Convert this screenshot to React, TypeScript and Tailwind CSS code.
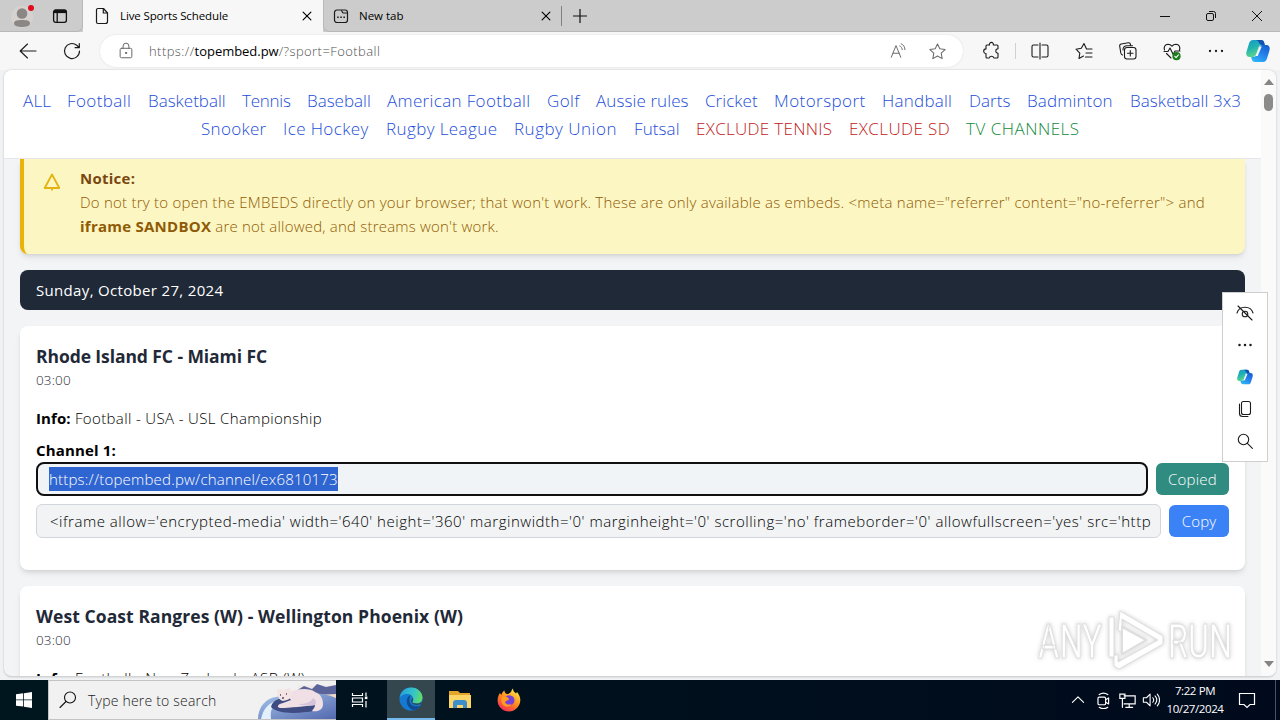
import type { ReactNode } from "react";

const sportLinks = [
  { label: "ALL", cls: "w-7 tracking-[0.2px] text-[#1d4ed8]" },
  { label: "Football", cls: "w-[65px] tracking-[0.4px] text-[#1d4ed8]" },
  { label: "Basketball", cls: "w-[78px] tracking-[0px] text-[#1d4ed8]" },
  { label: "Tennis", cls: "w-[49px] tracking-[-0.25px] text-[#1d4ed8]" },
  { label: "Baseball", cls: "w-16 tracking-[0px] text-[#1d4ed8]" },
  { label: "American Football", cls: "w-36 tracking-[0.35px] text-[#1d4ed8]" },
  { label: "Golf", cls: "w-[33px] tracking-[0.4px] text-[#1d4ed8]" },
  { label: "Aussie rules", cls: "w-[93px] tracking-[0.1px] text-[#1d4ed8]" },
  { label: "Cricket", cls: "w-[53px] tracking-[0.05px] text-[#1d4ed8]" },
  { label: "Motorsport", cls: "w-[92px] tracking-[0.45px] text-[#1d4ed8]" },
  { label: "Handball", cls: "w-[71px] tracking-[0.25px] text-[#1d4ed8]" },
  { label: "Darts", cls: "w-[42px] tracking-[0.05px] text-[#1d4ed8]" },
  { label: "Badminton", cls: "w-[87px] tracking-[0.15px] text-[#1d4ed8]" },
  { label: "Basketball 3x3", cls: "w-[111px] tracking-[0.08px] text-[#1d4ed8]" },
];

const moreLinks = [
  { label: "Snooker", cls: "w-[66px] tracking-[0.3px] text-[#1d4ed8]" },
  { label: "Ice Hockey", cls: "w-[87px] tracking-[0.4px] text-[#1d4ed8]" },
  { label: "Rugby League", cls: "w-28 tracking-[0.4px] text-[#1d4ed8]" },
  { label: "Rugby Union", cls: "w-[104px] tracking-[0.5px] text-[#1d4ed8]" },
  { label: "Futsal", cls: "w-[46px] tracking-[0.1px] text-[#1d4ed8]" },
  { label: "EXCLUDE TENNIS", cls: "w-[137px] tracking-[0.3px] text-[#c11a1a]" },
  { label: "EXCLUDE SD", cls: "w-[101px] tracking-[0.4px] text-[#c11a1a]" },
  { label: "TV CHANNELS", cls: "w-[114px] tracking-[0.5px] text-[#128a3c]" },
];

type IconProps = { children: ReactNode; size?: string; className?: string };

function Icon({ children, size = "size-5", className = "" }: IconProps) {
  return (
    <svg
      viewBox="0 0 20 20"
      className={`${size} shrink-0 ${className}`}
      fill="none"
      stroke="currentColor"
      strokeWidth="1.1"
      strokeLinecap="round"
      strokeLinejoin="round"
    >
      {children}
    </svg>
  );
}

function Copilot({ size }: { size: string }) {
  return (
    <svg viewBox="0 0 24 24" className={`${size} shrink-0`}>
      <defs>
        <linearGradient id="cpl" x1="0" y1="0" x2="0.4" y2="1">
          <stop offset="0" stopColor="#1598c8" />
          <stop offset="0.5" stopColor="#21b3b0" />
          <stop offset="1" stopColor="#5fd88c" />
        </linearGradient>
        <linearGradient id="cpr" x1="0.8" y1="0" x2="0.2" y2="1">
          <stop offset="0" stopColor="#175fd0" />
          <stop offset="0.5" stopColor="#2583ee" />
          <stop offset="1" stopColor="#31b8f5" />
        </linearGradient>
      </defs>
      <path d="M7 1h8c2 0 2.800 1 3.300 3l.5 2h-3c-2 0-2.800 1-3.400 3l-2 6c-.8 2-1.700 3-3.600 3H3.500C.8 18-.2 15.500.5 12.800L3 4.500C3.700 2.200 4.800 1 7 1Z" fill="url(#cpl)" />
      <path d="M17 23H9c-2 0-2.800-1-3.300-3l-.6-2h2c2 0 3.200-1 3.800-3l2-6c.7-2 1.700-3 3.600-3h4c2.700 0 3.700 2.500 3 5.200L21 19.500c-.7 2.300-1.800 3.500-4 3.500Z" fill="url(#cpr)" />
      <path d="M9.500 1H15c2 0 2.800 1 3.300 3l.5 2h-3c-2.600 0-3-5-6.300-5Z" fill="#1450b4" />
      <path d="m13.500 7.500-4 9.500h2.200l4-9.500Z" fill="#f3fbff" />
    </svg>
  );
}

function TitleBar() {
  return (
    <div className="flex h-8 shrink-0 bg-[#cccccc] text-black">
      <div className="flex w-[83px] items-center rounded-br-md border-b border-r border-[#b8b8b8] pl-[11px]">
        <svg viewBox="0 0 22 24" className="h-6 w-[22px] overflow-visible">
          <circle cx="11" cy="13" r="11" fill="#d6d2d0" />
          <circle cx="11" cy="9.500" r="5.300" fill="#8b8784" />
          <path d="M3 19.500c0-3 3-3.500 8-3.500s8 .5 8 3.500c0 2.500-4 3.500-8 3.500s-8-1-8-3.500Z" fill="#8b8784" />
          <circle cx="20" cy="4" r="3" fill="#e00b1c" />
        </svg>
        <svg viewBox="0 0 16 16" className="ml-[19px] size-4" fill="none" stroke="#111" strokeWidth="1.300">
          <rect x="1.600" y="2" width="12.800" height="12.300" rx="2" />
          <path d="M2 3.600h12" strokeWidth="3" />
          <path d="M5.200 5v9" />
        </svg>
      </div>
      <div className="flex w-60 items-center bg-[#f7f7f7] pl-3 pr-[10px]">
        <svg viewBox="0 0 14 18" className="h-[18px] w-3.5" fill="none" stroke="#1b1b1b" strokeWidth="1.200" strokeLinejoin="round">
          <path d="M3 1.500h5.500L12.500 6v8.500a2 2 0 0 1-2 2H3a1.500 1.500 0 0 1-1.500-1.500V3A1.500 1.500 0 0 1 3 1.500Z" />
          <path d="M8.300 1.500V6h4.200" />
        </svg>
        <span className="ml-[11px] whitespace-nowrap text-[11.5px] tracking-[-0.12px]">Live Sports Schedule</span>
        <Icon size="ml-auto size-3">
          <path d="m3.500 3.500 13 13M16.500 3.500l-13 13" strokeWidth="1.900" />
        </Icon>
      </div>
      <div className="flex w-[239px] items-center rounded-bl-md border-b border-l border-[#b8b8b8] pl-[9px] pr-[10px]">
        <svg viewBox="0 0 16 16" className="size-4" fill="none" stroke="#1b1b1b" strokeWidth="1.200">
          <rect x="1.500" y="2" width="13" height="12.500" rx="2.500" />
          <path d="M8 2.500c1.500 0 1 2.500 2.500 2.500h4" />
          <path d="M4.200 9.200h1.500M7.300 9.200h1.500M10.400 9.200h1.500" strokeWidth="1.500" />
        </svg>
        <span className="ml-[10px] whitespace-nowrap text-[11.5px]">New tab</span>
        <Icon size="ml-auto size-3">
          <path d="m3.500 3.500 13 13M16.500 3.500l-13 13" strokeWidth="1.900" />
        </Icon>
      </div>
      <div className="flex flex-1 items-center border-b border-[#b8b8b8]">
        <span className="-ml-px h-5 w-px bg-[#808080]" />
        <svg viewBox="0 0 16 16" className="ml-[10px] size-4" stroke="#111" strokeWidth="1.200">
          <path d="M8 1v14M1 8h14" />
        </svg>
        <div className="ml-auto flex">
          <span className="flex w-[46px] justify-center">
            <svg viewBox="0 0 12 12" className="size-3" fill="none" stroke="#111"><path d="M1 6.500h10" /></svg>
          </span>
          <span className="flex w-[46px] justify-center">
            <svg viewBox="0 0 12 12" className="size-3" fill="none" stroke="#111">
              <rect x="1.500" y="3.500" width="7" height="7" rx="1.500" />
              <path d="M4 1.500h4.500a2 2 0 0 1 2 2V8" />
            </svg>
          </span>
          <span className="flex w-[46px] justify-center">
            <svg viewBox="0 0 12 12" className="size-3" fill="none" stroke="#111"><path d="m1 1 10 10M11 1 1 11" /></svg>
          </span>
        </div>
      </div>
    </div>
  );
}

function Toolbar() {
  return (
    <div className="flex h-[38px] shrink-0 items-center bg-[#f7f7f7] pl-[18px] text-[#1b1b1b]">
      <Icon className="-mt-px">
        <path d="M18 10H2.500M9.500 3 2.200 10l7.300 7" />
      </Icon>
      <Icon size="ml-6 size-5">
        <path d="M17.500 10a7.500 7.500 0 1 1-2.800-5.800L17 6.500M17.300 2.500v4.200h-4.200" strokeWidth="1.200" />
      </Icon>
      <div className="ml-[18px] flex h-8 w-[863px] items-center rounded-full bg-white pl-[17px] pr-4 shadow-[0_0_2px_rgba(0,0,0,0.12)]">
        <Icon size="size-[18px]" className="text-[#666]">
          <rect x="3.500" y="7" width="13" height="10.500" rx="1.500" />
          <path d="M6.800 7V4.500a3.200 3.200 0 0 1 6.400 0V7" />
          <circle cx="10" cy="12.200" r=".7" fill="currentColor" />
        </Icon>
        <span className="ml-[14px] whitespace-nowrap pt-px text-[13px] font-light tracking-[0.43px] text-[#505050]">
          https://<span className="font-normal tracking-[-0.03px] text-black">topembed.pw</span>/?sport=Football
        </span>
        <Icon size="ml-auto size-[18px]" className="text-[#6b6b6b]">
          <path d="M2.500 17 7.800 4l5.300 13M4.300 12.500h7M12 4.500c1.800.8 2.700 2.200 2.700 4M13.500 2c2.700 1.200 4.200 3.400 4.200 6.500" />
        </Icon>
        <Icon size="ml-[21px] size-[19px]" className="text-[#6b6b6b]">
          <path d="m10 2 2.400 5.200 5.600.7-4.100 3.900 1 5.700L10 14.700l-4.900 2.800 1-5.700L2 7.900l5.600-.7L10 2Z" />
        </Icon>
      </div>
      <Icon size="ml-[19px] size-5">
        <path d="M7.500 4a2 2 0 1 1 3.800 0H15a1 1 0 0 1 1 1v2.800a2.200 2.200 0 1 0 0 4.400V16a1 1 0 0 1-1 1h-3.200a2.300 2.300 0 0 0-4.500 0H5a1 1 0 0 1-1-1v-3.500a2.300 2.300 0 1 1 0-4.600V5a1 1 0 0 1 1-1h2.500Z" />
      </Icon>
      <span className="ml-[13px] h-4 w-px bg-[#d0d0d0]" />
      <Icon size="ml-[14px] size-5">
        <path d="M8 4H3.500A1.500 1.500 0 0 0 2 5.500v9A1.500 1.500 0 0 0 3.500 16H8M12 4h4.500A1.500 1.500 0 0 1 18 5.500v9a1.500 1.500 0 0 1-1.500 1.500H12M10 2v16" strokeLinejoin="miter" />
      </Icon>
      <Icon size="ml-6 size-5">
        <path d="M18 8h-5.500L10 2.500 7.300 7.200 2 8.200l3.800 4-.8 5.300 4.500-2.400M12 12h6M11.500 16H18" />
      </Icon>
      <Icon size="ml-6 size-5">
        <rect x="6.500" y="6.500" width="11.500" height="11.500" rx="2.500" />
        <path d="M12.300 9.500v5.500M9.500 12.300H15M4.500 14c-1.200-.5-1.500-1-1.700-2L1.700 5.200c-.2-1.300.5-2 1.600-2.200l7-1.200c1.200-.2 2 .5 2.300 2M5 9C5 6 6 4.800 9 4.800h5.500" />
      </Icon>
      <Icon size="ml-6 size-5">
        <path d="M17.500 9c1-3-.5-5.700-3.500-5.800-2 0-3.300 1-4 2-.8-1-2-2-4-2C3 3.300 1.500 6 2.500 9M2 10.500h4L8 7l3.200 6.500L13 10h5M4.500 12.500 9 17" />
        <circle cx="14.500" cy="15.200" r="4.100" fill="#1c7d1c" stroke="none" />
        <path d="m12.800 15.300 1.300 1.300 2.300-2.800" stroke="#fff" />
      </Icon>
      <Icon size="ml-6 size-5">
        <path d="M4 10h.01M10 10h.01M16 10h.01" strokeWidth="2.300" />
      </Icon>
      <span className="ml-5">
        <Copilot size="size-6" />
      </span>
    </div>
  );
}

function SportNav() {
  return (
    <nav className="h-[89px] shrink-0 border-b border-gray-200 bg-white pt-[17px] text-[17px] font-light leading-7">
      <div className="flex justify-center gap-4 pr-px">
        {sportLinks.map((link) => (
          <a key={link.label} className={`whitespace-nowrap ${link.cls}`}>{link.label}</a>
        ))}
      </div>
      <div className="flex justify-center gap-4 pl-4">
        {moreLinks.map((link) => (
          <a key={link.label} className={`whitespace-nowrap ${link.cls}`}>{link.label}</a>
        ))}
      </div>
    </nav>
  );
}

function Notice() {
  return (
    <div className="flex h-[95px] shrink-0 rounded-b-lg border-l-4 border-[#eab308] bg-[#fcf6c2] px-4 pt-[7px] text-[15px] leading-6 shadow-md">
      <svg viewBox="0 0 24 24" className="mt-1 size-6 shrink-0" fill="none" stroke="#e3b40f" strokeWidth="1.800" strokeLinejoin="round">
        <path d="M12 4.500 19.300 18H4.700L12 4.500ZM12 18v2.500" />
      </svg>
      <div className="ml-4 text-[#8f5a05]">
        <p className="font-bold tracking-[0.25px] text-[#7a4710]">Notice:</p>
        <p className="whitespace-nowrap font-light tracking-[0.235px]">
          Do not try to open the EMBEDS directly on your browser; that won't work. These are only available as embeds. &lt;meta name="referrer" content="no-referrer"&gt; and
        </p>
        <p className="font-light tracking-[0.2px]">
          <b className="font-bold tracking-[0.25px]">iframe SANDBOX</b> are not allowed, and streams won't work.
        </p>
      </div>
    </div>
  );
}

function MatchCard({ title, info, children }: { title: ReactNode; info: string; children?: ReactNode }) {
  return (
    <div className="mt-4 h-[244px] shrink-0 rounded-lg bg-white p-4 text-[15px] shadow-md">
      <h3 className="text-[17.5px] font-bold leading-7 text-[#1f2937]">{title}</h3>
      <p className="text-[13.5px] font-light leading-5 tracking-[0.15px] text-[#1f2937]">03:00</p>
      <p className="mt-4 font-light leading-6 tracking-[0.36px] text-black">
        <b className="font-bold tracking-[0.1px]">Info:</b> {info}
      </p>
      {children}
    </div>
  );
}

function Page() {
  return (
    <div className="relative mx-1 flex h-[607px] shrink-0 overflow-hidden rounded-lg border-b border-[#d4d4d4] bg-[#f2f4f5] shadow-[0_0_2px_rgba(0,0,0,0.25)]">
      <div className="flex w-[1257px] flex-col">
        <SportNav />
        <main className="flex min-h-0 flex-1 flex-col pl-4 pr-4">
          <Notice />
          <div className="mt-4 h-10 shrink-0 rounded-lg bg-[#1f2937] px-4 text-[15px] leading-10 tracking-[0.33px] text-white">
            Sunday, October 27, 2024
          </div>
          <MatchCard
            title={<span className="tracking-[-0.08px]">Rhode Island FC - Miami FC</span>}
            info="Football - USA - USL Championship"
          >
            <p className="mt-2 font-bold leading-6 tracking-[0.15px] text-black">Channel 1:</p>
            <div className="flex items-center gap-2 font-light">
              <div className="flex h-[34px] w-[1112px] items-center rounded-lg border-2 border-[#101010] bg-[#f1f4f6] pl-[11px]">
                <span className="w-[289px] whitespace-nowrap bg-[#2f65d0] leading-6 tracking-[0.2px] text-white">
                  https://topembed.pw/channel/ex6810173
                </span>
              </div>
              <button className="h-8 w-[73px] rounded-md bg-[#308c80] tracking-[0.2px] text-white">Copied</button>
            </div>
            <div className="mt-2 flex items-center gap-2 font-light">
              <div className="h-[34px] w-[1125px] rounded-md border border-gray-300 bg-[#f1f3f4] px-[13px]">
                <div className="w-[1100px] whitespace-nowrap leading-8 tracking-[0.53px] text-black">
                  &lt;iframe allow='encrypted-media' width='640' height='360' marginwidth='0' marginheight='0' scrolling='no' frameborder='0' allowfullscreen='yes' src='http
                </div>
              </div>
              <button className="h-8 w-[60px] rounded-md bg-[#3b82f6] tracking-[0.2px] text-white">Copy</button>
            </div>
          </MatchCard>
          <MatchCard
            title={<span className="tracking-[0.08px]">West Coast Rangres (W) - Wellington Phoenix (W)</span>}
            info="Football - New Zealand - ASB (W)"
          />
        </main>
      </div>
      <div className="flex flex-1 flex-col items-center bg-[#fafafa] py-[9px]">
        <svg viewBox="0 0 10 6" className="h-1.5 w-2.5"><path d="M5 0 10 6H0Z" fill="#858585" /></svg>
        <span className="mt-[9px] h-[17px] w-[9px] rounded-full bg-[#8b8b8b]" />
        <svg viewBox="0 0 10 6" className="mt-auto h-1.5 w-2.5"><path d="M0 0h10L5 6Z" fill="#858585" /></svg>
      </div>
    </div>
  );
}

function MiniMenu() {
  return (
    <div className="absolute left-[1222px] top-[292px] flex h-[170px] w-[46px] flex-col items-center gap-3 border border-[#cfcfcf] bg-white pt-[10px] text-[#1b1b1b]">
      <Icon>
        <path d="M2 10c1-3.500 4-5.700 8-5.700s7 2.200 8 5.700M3 3l14 14" />
        <circle cx="10" cy="11" r="2.800" />
      </Icon>
      <Icon>
        <path d="M4.500 10h.01M10 10h.01M15.500 10h.01" strokeWidth="2.500" />
      </Icon>
      <span className="flex size-5 items-center justify-center"><Copilot size="size-4" /></span>
      <Icon>
        <rect x="6.500" y="2.500" width="9" height="13" rx="2" />
        <path d="M4.500 5v9.500a3 3 0 0 0 3 3h5.500" />
      </Icon>
      <Icon>
        <circle cx="8.500" cy="8.500" r="5.200" />
        <path d="m12.400 12.400 5 5" />
      </Icon>
    </div>
  );
}

function Watermark() {
  return (
    <svg viewBox="0 0 200 66" className="absolute left-[1035px] top-[607px] h-[66px] w-[200px] drop-shadow-[0_0_2px_rgba(0,0,0,0.2)]" fill="#fff" stroke="#dedede">
      <g fontFamily="Roboto, sans-serif" fontSize="48" strokeWidth="1">
        <text x="3" y="51" textLength="64" lengthAdjust="spacingAndGlyphs">ANY</text>
        <text x="133" y="51" textLength="64" lengthAdjust="spacingAndGlyphs">RUN</text>
      </g>
      <path d="M85 4 128 29v8L84 62l-5-3V49l4-2v8l40-22L87 12v13l-4-2Z" />
      <path d="M87 20 111 33 87 47Z" strokeWidth="2" />
      <path d="M74 10h5v40h-5Z" />
    </svg>
  );
}

function BearScene() {
  return (
    <svg viewBox="0 0 78 38" className="h-[38px] w-[78px]">
      <defs>
        <linearGradient id="ice" x1="0" y1="0" x2="1" y2="1">
          <stop offset="0" stopColor="#a9c7ec" />
          <stop offset="1" stopColor="#5268ae" />
        </linearGradient>
        <linearGradient id="sky" x1="0" y1="0" x2="0" y2="1">
          <stop offset="0" stopColor="#f1eceb" />
          <stop offset="1" stopColor="#eec9a6" />
        </linearGradient>
      </defs>
      <path d="M40 4h38v22H40Z" fill="url(#sky)" />
      <path d="m38 10 8-5 8 3 5-5 9 3 10-2v9L58 14Z" fill="#5a649b" />
      <path d="M0 38c0-12 8-21 18-22 22-6 48-5 60 1v21Z" fill="url(#ice)" />
      <path d="M3 38c2-10 8-17 18-19-7 5-9 11-8 19Z" fill="#e3effb" />
      <path d="M13 26c1-5 5-8 12-9l31 2c6 7 2 12-8 12-15 2-29 1-35-5Z" fill="#3f4c83" />
      <path d="M28 13c9-5 22-7 29-2 6 2 8 7 8 12 0 6-5 8-11 7 2-3 3-4 3-6-10 1-25 3-35 3-4-1-2-4 3-5l8-3Z" fill="#f0dfe4" />
      <path d="M40 23c8 0 13-2 15-6 3 2 4 5 2 7-5 1-11 1-17-1Z" fill="#d5c5dc" />
      <path d="M19 10c0-2 3-3 5-1l5-1c1-2 4-1 4 1 2 4 0 9-4 10l-4 1c-4-1-6-5-6-10Z" fill="#f4e4e4" />
      <path d="M22 14h1M28 13h1M24 17h2" stroke="#54485c" strokeWidth="1.300" />
    </svg>
  );
}

function Taskbar() {
  return (
    <div className="mt-auto flex h-10 shrink-0 items-center bg-gradient-to-r from-[#00161e] to-[#000a1c] text-white">
      <span className="flex w-12 justify-center">
        <svg viewBox="0 0 16 16" className="size-4" fill="#fff">
          <path d="m0 2.300 7.200-1v6.200H0ZM8 1.200 16 0v7.500H8ZM0 8.300h7.200v6.300L0 13.700ZM8 8.300h8V16l-8-1.200Z" />
        </svg>
      </span>
      <div className="flex h-10 w-72 items-center border-y border-l border-[#c4c4c4] bg-[#f1f1f1] pl-[9px]">
        <Icon size="size-5" className="text-[#111]">
          <circle cx="12" cy="7.500" r="5.500" />
          <path d="m8 11.500-6 6" />
        </Icon>
        <span className="ml-[10px] whitespace-nowrap text-[14px] font-light tracking-[0.2px] text-[#222]">Type here to search</span>
        <span className="ml-auto"><BearScene /></span>
      </div>
      <span className="flex w-[51px] justify-center">
        <svg viewBox="0 0 18 18" className="-ml-[3px] size-[18px]" fill="none" stroke="#fff" strokeWidth="1.200">
          <path d="M1.500 2v2.500h10V2M1.500 16v-2.500h10V16M1.500 7h10v4h-10ZM15 1.500V5M15 10v6.500" />
          <path d="M13.800 5.500h2.600v2.600h-2.600Z" fill="#fff" stroke="none" />
        </svg>
      </span>
      <span className="flex h-10 w-12 items-center justify-center border-b-2 border-[#76b9ed] bg-[#34474e]">
        <svg viewBox="0 0 24 24" className="size-6">
          <defs>
            <linearGradient id="edgeTop" x1="0" y1="0.3" x2="1" y2="0.5">
              <stop offset="0" stopColor="#279fe0" />
              <stop offset="0.6" stopColor="#35c4c7" />
              <stop offset="1" stopColor="#62dd65" />
            </linearGradient>
          </defs>
          <circle cx="12" cy="12" r="11.500" fill="#1479cf" />
          <path d="M.6 11C1.500 4.500 6.500.5 12 .5c7 0 11.500 5 11.500 10 0 4-3 6-6.200 6-2.500 0-4-.8-4-1.500 0-.6 1-.9 1-3 0-2.500-2.500-5-6-5C4.500 7 1.500 9 .6 11Z" fill="url(#edgeTop)" />
          <path d="M12 7.800c-3 1.400-4.700 4-4.200 7.500.5 4 3.400 7 7 7.800 2.700-.6 5.200-2.400 6.700-4.700-4 2-10.500 1-11-4.300-.2-2.500.5-4 1.500-6.300Z" fill="#114a91" />
          <path d="M14 11c-1.800 1.200-2.500 3-1.200 5 1.700 2 5 2.500 8 1.200l1.500.4.700-2.600c-1.600 1.200-3.400 1.500-5.700 1.500-2.500 0-4-.8-4-1.500 0-.6 1-.9.7-4Z" fill="#34474e" />
        </svg>
      </span>
      <span className="flex w-[49px] justify-center">
        <svg viewBox="0 0 22 20" className="h-5 w-[22px]">
          <path d="M0 1h9l2 2h10v15H0Z" fill="#e3a62b" />
          <path d="M0 5h22v13H0Z" fill="#fbd667" />
          <path d="M4 18v-5a3 3 0 0 1 3-3h8a3 3 0 0 1 3 3v5h-4v-3H8v3Z" fill="#3d8fcb" />
        </svg>
      </span>
      <span className="flex w-[49px] justify-center">
        <svg viewBox="0 0 24 24" className="size-6">
          <defs>
            <linearGradient id="fox" x1="0.8" y1="0" x2="0.2" y2="1">
              <stop offset="0" stopColor="#fff04a" />
              <stop offset="0.5" stopColor="#ff8a1e" />
              <stop offset="1" stopColor="#f3245c" />
            </linearGradient>
          </defs>
          <path d="M3 5c.5 1 1 1.500 1.500 1.800C5 4.500 6 3.500 7.500 2.500c0 1.800.8 2.800 2.500 3.500 2-.2 3-1 4-2 .5-1.500 1-2.500 2-3.500 0 2.500 1.500 3.500 3 5l1-1.500c2 2.500 3.500 5 3.300 8.500C23 18.500 18 23.500 12 23.500S.6 18.800.6 12.500C.6 9.500 1.500 7 3 5Z" fill="url(#fox)" />
          <path d="M8 10c1-2.500 4-3.500 7-2 2.500 1.500 3 4 2 6.500-1 2-3 3-5 3-3 0-5-2-4.500-5 2 .5 3.500 0 4.500-1.500Z" fill="#7542d6" />
          <path d="M5 9c2-.8 4-.5 5.500.3L12 11c-1 1.500-3 1.500-4 3 1 2.500 4 3.300 6.500 2-1.500 3.500-7 3.500-9.200 0C4 13.500 4 11 5 9Z" fill="#ff9a22" />
        </svg>
      </span>
      <div className="ml-auto flex items-center">
        <Icon size="size-4" className="mr-1"><path d="m3 13 7-7 7 7" strokeWidth="1.400" /></Icon>
        <Icon size="ml-[5px] size-[17px]">
          <rect x="3.500" y="6" width="9" height="9" rx="1.500" strokeWidth="1.400" />
          <path d="m12.500 9 3.500-2v7l-3.500-2M5 3c3-2 7-2 10 0M5 18c3 2 7 2 10 0" strokeWidth="1.400" />
        </Icon>
        <Icon size="ml-[7px] size-[17px]">
          <path d="M6 4.500h13v9.500H6M12 14v4M8 18h8M1 2.500h6v5H1ZM4 7.500V18" strokeWidth="1.400" strokeLinejoin="miter" />
        </Icon>
        <Icon size="ml-[6px] size-[18px]">
          <path d="M1.500 7.500H5l4-4v13l-4-4H1.500ZM12 7.500c1.200 1.500 1.200 3.500 0 5M14.500 5.500c2.300 2.700 2.300 6.300 0 9M17 3.500c3.300 3.700 3.300 9.300 0 13" strokeWidth="1.200" />
        </Icon>
        <div className="ml-[5px] w-[60px] whitespace-nowrap text-center text-[11.5px] leading-[18px] tracking-[-0.4px]">
          <div>7:22 PM</div>
          <div>10/27/2024</div>
        </div>
        <svg viewBox="0 0 18 18" className="ml-[13px] size-[18px]" fill="none" stroke="#fff" strokeWidth="1.200">
          <path d="M1.500 2.500h15v11H12l-3 3-3-3H1.500Z" />
        </svg>
        <span className="ml-[19px] mr-1 h-10 w-px bg-[#4b535f]" />
      </div>
    </div>
  );
}

export default function App() {
  return (
    <div className="relative flex h-[720px] w-[1280px] flex-col overflow-hidden bg-[#f1f2f4] font-['Open_Sans','Noto_Sans',sans-serif]">
      <TitleBar />
      <Toolbar />
      <Page />
      <MiniMenu />
      <Watermark />
      <Taskbar />
    </div>
  );
}
